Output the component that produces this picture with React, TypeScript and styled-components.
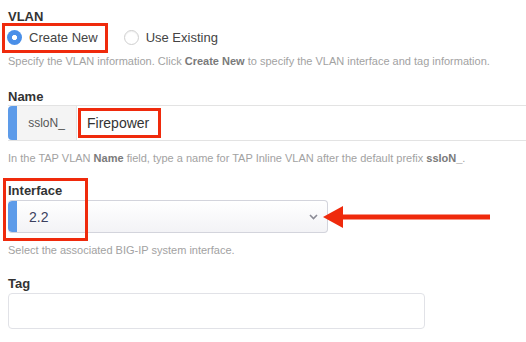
import styled, {createGlobalStyle, css} from 'styled-components';

const GlobalStyle = createGlobalStyle`
   html, body {
      margin: 0;
      padding: 0;
      background: #fff;
   }
   body {
      font-family: "Liberation Sans", Arial, Helvetica, sans-serif;
   }
`;

const Page = styled.div`
   position: relative;
   width: 526px;
   height: 342px;
   box-sizing: border-box;
   padding: 9px 0 0 8px;
   overflow: hidden;
`;

const Section = styled.section<{$gap: number}>`
   margin-top: ${p => p.$gap}px;
`;

const Label = styled.div<{$space?: number}>`
   font-size: 13px;
   font-weight: bold;
   color: #333;
   line-height: 16px;
   margin-bottom: ${p => p.$space ?? 0}px;
`;

const Help = styled.p<{$gap: number}>`
   margin: ${p => p.$gap}px 0 0;
   font-size: 11px;
   line-height: 14px;
   color: #a2a2a2;
   white-space: nowrap;
   b {
      color: #7a7a7a;
   }
`;

const RadioRow = styled.div`
   display: flex;
   align-items: center;
   height: 24px;
   gap: 26px;
   margin-left: -1px;
`;

const RadioOption = styled.label`
   display: flex;
   align-items: center;
   gap: 7px;
   font-size: 13px;
   color: #444;
`;

const RadioDot = styled.span<{$checked?: boolean}>`
   width: 15px;
   height: 15px;
   border-radius: 50%;
   box-sizing: border-box;
   ${p =>
      p.$checked
         ? css`
              background: radial-gradient(circle, #fff 0 2.2px, #4a8fe8 2.9px);
           `
         : css`
              background: #fff;
              border: 1px solid #cfcfcf;
              box-shadow: inset 0 1px 1px rgba(0, 0, 0, 0.06);
           `}
`;

const Accent = styled.span`
   flex: 0 0 9px;
   align-self: stretch;
   background: #5d9be9;
   border-radius: 4px 0 0 4px;
`;

const NameRow = styled.div`
   display: flex;
   width: 540px;
   height: 36px;
   box-sizing: border-box;
   border-top: 1px solid #e3e3e3;
   border-bottom: 1px solid #e3e3e3;
`;

const Prefix = styled.span`
   flex: 0 0 59px;
   display: flex;
   align-items: center;
   justify-content: center;
   background: #f4f4f4;
   border-right: 1px solid #e3e3e3;
   font-size: 12px;
   color: #555;
`;

const NameValue = styled.span`
   flex: 1;
   display: flex;
   align-items: center;
   padding-left: 10px;
   font-size: 14px;
   color: #333;
`;

const Select = styled.div`
   display: flex;
   align-items: center;
   width: 320px;
   height: 33px;
   box-sizing: border-box;
   border: 1px solid #d3d4dc;
   border-left: 0;
   border-radius: 4px;
   overflow: hidden;
   background: linear-gradient(#ffffff, #f3f3f6);
`;

const SelectValue = styled.span`
   flex: 1;
   padding-left: 12px;
   font-size: 14px;
   color: #3b3f5e;
`;

const Chevron = styled.svg`
   margin-right: 9px;
`;

const TagInput = styled.div`
   width: 417px;
   height: 36px;
   box-sizing: border-box;
   border: 1px solid #e1e2e7;
   border-radius: 4px;
   background: #fff;
`;

const Callout = styled.div<{$x: number; $y: number; $w: number; $h: number}>`
   position: absolute;
   left: ${p => p.$x}px;
   top: ${p => p.$y}px;
   width: ${p => p.$w}px;
   height: ${p => p.$h}px;
   box-sizing: border-box;
   border: 3px solid #ef2a0c;
   pointer-events: none;
`;

const Arrow = styled.svg`
   position: absolute;
   left: 323px;
   top: 206px;
`;

export default function App() {
   return (
      <Page>
         <GlobalStyle />
         <Section $gap={0}>
            <Label>VLAN</Label>
            <RadioRow>
               <RadioOption>
                  <RadioDot $checked />
                  Create New
               </RadioOption>
               <RadioOption>
                  <RadioDot />
                  Use Existing
               </RadioOption>
            </RadioRow>
            <Help $gap={5}>
               Specify the VLAN information. Click <b>Create New</b> to specify the VLAN interface and tag
               information.
            </Help>
         </Section>

         <Section $gap={21}>
            <Label>Name</Label>
            <NameRow>
               <Accent />
               <Prefix>ssloN_</Prefix>
               <NameValue>Firepower</NameValue>
            </NameRow>
            <Help $gap={10}>
               In the TAP VLAN <b>Name</b> field, type a name for TAP Inline VLAN after the default prefix{' '}
               <b>ssloN_</b>.
            </Help>
         </Section>

         <Section $gap={18}>
            <Label $space={1}>Interface</Label>
            <Select>
               <Accent />
               <SelectValue>2.2</SelectValue>
               <Chevron width="9" height="6" viewBox="0 0 9 6">
                  <path d="M1 1l3.5 3.5L8 1" fill="none" stroke="#8b8b96" strokeWidth="1.6" />
               </Chevron>
            </Select>
            <Help $gap={10}>Select the associated BIG-IP system interface.</Help>
         </Section>

         <Section $gap={19}>
            <Label $space={1}>Tag</Label>
            <TagInput />
         </Section>

         <Callout $x={2} $y={23} $w={106} $h={30} />
         <Callout $x={78} $y={108} $w={83} $h={30} />
         <Callout $x={3} $y={178} $w={85} $h={63} />
         <Arrow width="168" height="22" viewBox="0 0 168 22">
            <polygon points="0,11 20,0 20,22" fill="#ef2a0c" />
            <rect x="18" y="8.5" width="149" height="5" fill="#ef2a0c" />
         </Arrow>
      </Page>
   );
}
